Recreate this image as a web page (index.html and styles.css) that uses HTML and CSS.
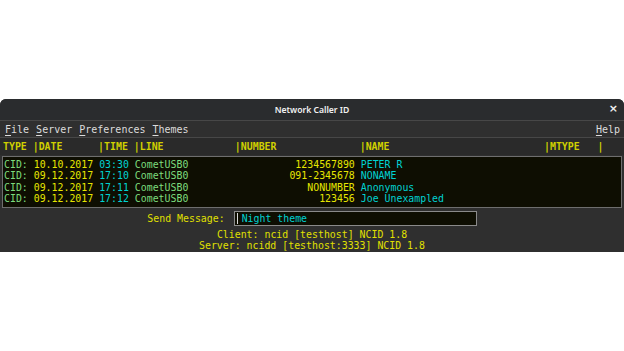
FILE: index.html
```html
<!DOCTYPE html>
<html>
<head>
<meta charset="utf-8">
<link rel="stylesheet" href="styles.css">
</head>
<body>
<div class="window">
  <div class="titlebar">
    <span class="title">Network Caller ID</span>
    <span class="close">×</span>
  </div>
  <div class="menubar">
    <span class="menu"><u>F</u>ile</span>
    <span class="menu"><u>S</u>erver</span>
    <span class="menu"><u>P</u>references</span>
    <span class="menu"><u>T</u>hemes</span>
    <span class="menu help"><u>H</u>elp</span>
  </div>
  <div class="header">TYPE |DATE      |TIME |LINE            |NUMBER              |NAME                          |MTYPE   |</div>
  <div class="list">
    <div class="row"><span class="g">CID:</span> <span class="y">10.10.2017</span> <span class="c">03:30</span> <span class="g">CometUSB0</span>                  <span class="y">1234567890</span> <span class="c">PETER R</span></div>
    <div class="row"><span class="g">CID:</span> <span class="y">09.12.2017</span> <span class="c">17:10</span> <span class="g">CometUSB0</span>                 <span class="y">091-2345678</span> <span class="c">NONAME</span></div>
    <div class="row"><span class="g">CID:</span> <span class="y">09.12.2017</span> <span class="c">17:11</span> <span class="g">CometUSB0</span>                    <span class="y">NONUMBER</span> <span class="c">Anonymous</span></div>
    <div class="row"><span class="g">CID:</span> <span class="y">09.12.2017</span> <span class="c">17:12</span> <span class="g">CometUSB0</span>                      <span class="y">123456</span> <span class="c">Joe Unexampled</span></div>
  </div>
  <div class="send">
    <span class="label">Send Message:</span>
    <div class="input"><span class="cursor"></span><span class="c">Night theme</span></div>
  </div>
  <div class="status">Client: ncid [testhost] NCID 1.8</div>
  <div class="status">Server: ncidd [testhost:3333] NCID 1.8</div>
</div>
</body>
</html>
```
FILE: styles.css
```css
html, body {
  margin: 0;
  padding: 0;
  background: #ffffff;
}
body {
  height: 351px;
  display: flex;
  flex-direction: column;
  justify-content: center;
}
.window {
  width: 624px;
  height: 153px;
  background: #2f2f2f;
  border-radius: 6px 6px 0 0;
  overflow: hidden;
  font-family: "DejaVu Sans Mono", monospace;
  font-size: 9.9px;
  display: flex;
  flex-direction: column;
}
.titlebar {
  height: 21px;
  background: #2a2c2e;
  border-bottom: 1px solid #474747;
  display: flex;
  align-items: center;
  justify-content: center;
  position: relative;
}
.title {
  font-family: "Noto Sans", sans-serif;
  font-weight: 600;
  font-size: 8.6px;
  color: #f2f2f2;
}
.close {
  position: absolute;
  right: 6px;
  top: 3px;
  font-family: "DejaVu Sans", sans-serif;
  font-weight: bold;
  font-size: 11px;
  color: #f0f0f0;
}
.menubar {
  height: 17px;
  display: flex;
  align-items: center;
  gap: 7px;
  padding: 1px 4px 0 5px;
  box-sizing: border-box;
  color: #dcdcdc;
  border-bottom: 1px solid #474747;
  background: #2f2f2f;
  font-size: 10px;
}
.menu u {
  text-decoration-thickness: 1px;
  text-underline-offset: 2px;
}
.help {
  margin-left: auto;
}
.header {
  height: 17px;
  line-height: 18px;
  white-space: pre;
  font-weight: bold;
  color: #d0d000;
  padding-left: 3px;
  background: #2a2a2a;
}
.list {
  margin: 1px 2px 0 2px;
  border: 1px solid #6e6e6e;
  background: #0e0e02;
  padding: 2px 1px 2px 1px;
  height: 46px;
}
.row {
  white-space: pre;
  height: 11.4px;
  line-height: 11.4px;
}
.g { color: #7ddc7d; }
.y { color: #e6e600; }
.c { color: #00d2d2; }
.send {
  margin-top: 3px;
  display: flex;
  justify-content: center;
  align-items: center;
  gap: 9px;
  color: #e0e000;
}
.input {
  width: 239px;
  height: 13px;
  border: 1px solid #8a8a8a;
  background: #0e0e02;
  display: flex;
  align-items: center;
  padding-left: 2px;
  gap: 4px;
}
.cursor {
  width: 1px;
  height: 11px;
  background: #d8d8d8;
}
.status {
  text-align: center;
  color: #e0e000;
  line-height: 11.4px;
}
.send + .status {
  margin-top: 3px;
}
```
